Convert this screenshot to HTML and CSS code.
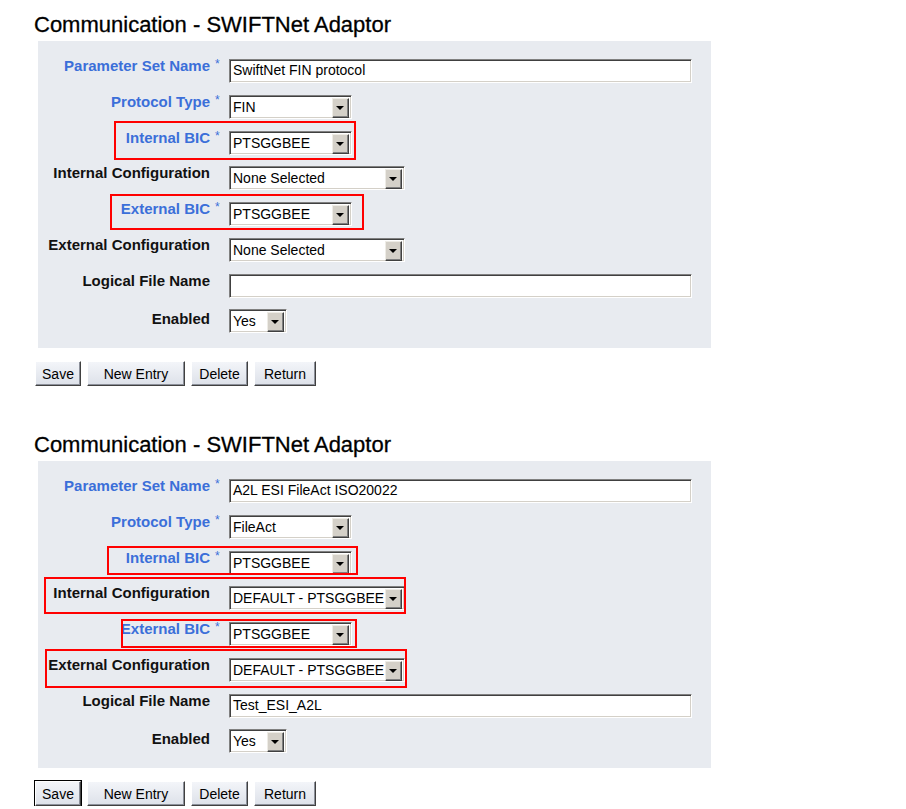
FILE: index.html
```html
<!DOCTYPE html>
<html lang="en">
<head>
  <meta charset="UTF-8" />
  <title>Communication - SWIFTNet Adaptor</title>
  <link rel="stylesheet" href="styles.css">
</head>
<body>
  <div class="page">

    <div class="section">
      <h1 class="title">Communication - SWIFTNet Adaptor</h1>
      <div class="panel">
        <div class="row">
          <label class="label required">Parameter Set Name</label>
          <span class="star">*</span>
          <div class="field"><div class="input">SwiftNet FIN protocol</div></div>
        </div>
        <div class="row">
          <label class="label required">Protocol Type</label>
          <span class="star">*</span>
          <div class="field"><div class="select select-bic"><span class="value">FIN</span><span class="drop"></span></div></div>
        </div>
        <div class="row">
          <span class="mark mark-1a"></span>
          <label class="label required">Internal BIC</label>
          <span class="star">*</span>
          <div class="field"><div class="select select-bic"><span class="value">PTSGGBEE</span><span class="drop"></span></div></div>
        </div>
        <div class="row">
          <label class="label">Internal Configuration</label>
          <span class="star"></span>
          <div class="field"><div class="select select-config"><span class="value">None Selected</span><span class="drop"></span></div></div>
        </div>
        <div class="row">
          <span class="mark mark-1b"></span>
          <label class="label required">External BIC</label>
          <span class="star">*</span>
          <div class="field"><div class="select select-bic"><span class="value">PTSGGBEE</span><span class="drop"></span></div></div>
        </div>
        <div class="row">
          <label class="label">External Configuration</label>
          <span class="star"></span>
          <div class="field"><div class="select select-config"><span class="value">None Selected</span><span class="drop"></span></div></div>
        </div>
        <div class="row">
          <label class="label">Logical File Name</label>
          <span class="star"></span>
          <div class="field"><div class="input"></div></div>
        </div>
        <div class="row">
          <label class="label label-low">Enabled</label>
          <span class="star"></span>
          <div class="field"><div class="select select-yes"><span class="value">Yes</span><span class="drop"></span></div></div>
        </div>
      </div>
      <div class="actions">
        <button class="btn btn-save">Save</button>
        <button class="btn btn-new">New Entry</button>
        <button class="btn btn-delete">Delete</button>
        <button class="btn btn-return">Return</button>
      </div>
    </div>

    <div class="section">
      <h1 class="title">Communication - SWIFTNet Adaptor</h1>
      <div class="panel">
        <div class="row">
          <label class="label required">Parameter Set Name</label>
          <span class="star">*</span>
          <div class="field"><div class="input">A2L ESI FileAct ISO20022</div></div>
        </div>
        <div class="row">
          <label class="label required">Protocol Type</label>
          <span class="star">*</span>
          <div class="field"><div class="select select-bic"><span class="value">FileAct</span><span class="drop"></span></div></div>
        </div>
        <div class="row">
          <span class="mark mark-2a"></span>
          <label class="label required">Internal BIC</label>
          <span class="star">*</span>
          <div class="field"><div class="select select-bic"><span class="value">PTSGGBEE</span><span class="drop"></span></div></div>
        </div>
        <div class="row">
          <span class="mark mark-2b"></span>
          <label class="label">Internal Configuration</label>
          <span class="star"></span>
          <div class="field"><div class="select select-config"><span class="value">DEFAULT - PTSGGBEE</span><span class="drop"></span></div></div>
        </div>
        <div class="row">
          <span class="mark mark-2c"></span>
          <label class="label required">External BIC</label>
          <span class="star">*</span>
          <div class="field"><div class="select select-bic"><span class="value">PTSGGBEE</span><span class="drop"></span></div></div>
        </div>
        <div class="row">
          <span class="mark mark-2d"></span>
          <label class="label">External Configuration</label>
          <span class="star"></span>
          <div class="field"><div class="select select-config"><span class="value">DEFAULT - PTSGGBEE</span><span class="drop"></span></div></div>
        </div>
        <div class="row">
          <label class="label">Logical File Name</label>
          <span class="star"></span>
          <div class="field"><div class="input">Test_ESI_A2L</div></div>
        </div>
        <div class="row">
          <label class="label label-low">Enabled</label>
          <span class="star"></span>
          <div class="field"><div class="select select-yes"><span class="value">Yes</span><span class="drop"></span></div></div>
        </div>
      </div>
      <div class="actions">
        <button class="btn btn-save is-default">Save</button>
        <button class="btn btn-new">New Entry</button>
        <button class="btn btn-delete">Delete</button>
        <button class="btn btn-return">Return</button>
      </div>
    </div>

  </div>
</body>
</html>
```

FILE: styles.css
```css
body {
  margin: 0;
  background-color: #fff;
  color: #000;
  font-family: "Liberation Sans", Arial, sans-serif;
}

.page {
  padding: 12px 0 0 34px;
}

.section + .section {
  margin-top: 46px;
}

.title {
  margin: 0 0 4px;
  font-size: 22px;
  font-weight: normal;
  line-height: 25px;
  color: #000;
  -webkit-text-stroke: 0.3px #000;
}

.panel {
  width: 673px;
  margin-left: 4px;
  padding: 18px 0 3px;
  background-color: #e8ebf0;
}

.row {
  position: relative;
  display: grid;
  grid-template-columns: 172px 19px 1fr;
  height: 35.75px;
}

.label {
  font-size: 15px;
  font-weight: bold;
  line-height: 14px;
  text-align: right;
  color: #111;
}

.label-low {
  margin-top: 3px;
}

.label.required,
.star {
  color: #3b6fd9;
}

.star {
  padding-left: 5px;
  font-size: 12px;
  line-height: 11px;
}

/* text boxes and drop downs, old windows look */
.input,
.select {
  box-sizing: border-box;
  height: 24px;
  background-color: #fff;
  border: 1px solid;
  border-color: #808080 #fff #fff #808080;
  box-shadow: inset 1px 1px 0 #404040, inset -1px -1px 0 #d4d0c8;
  font-size: 14px;
  line-height: 18px;
  white-space: nowrap;
}

.input {
  width: 463px;
  padding: 1px 3px;
}

.select {
  display: flex;
  padding: 2px;
}

.select .value {
  flex: 1;
  min-width: 0;
  padding-left: 1px;
  overflow: hidden;
}

.select-bic {
  width: 123px;
}

.select-config {
  width: 176px;
}

.select-yes {
  width: 58px;
}

.drop {
  position: relative;
  flex: none;
  box-sizing: border-box;
  width: 17px;
  height: 20px;
  background-color: #d4d0c8;
  border: 1px solid;
  border-color: #eeece6 #404040 #404040 #eeece6;
  box-shadow: inset -1px -1px 0 #808080;
}

.drop::after {
  content: "";
  position: absolute;
  left: 3px;
  top: 7px;
  border-left: 4px solid transparent;
  border-right: 4px solid transparent;
  border-top: 4px solid #000;
}

/* red highlight boxes drawn over the rows */
.mark {
  position: absolute;
  z-index: 1;
  box-sizing: border-box;
  border: 2px solid #f00;
  pointer-events: none;
}

.mark-1a { left: 76px; top: -10px; width: 242px; height: 39px; }
.mark-1b { left: 72px; top: -8px; width: 254px; height: 36px; }
.mark-2a { left: 69px; top: -5px; width: 251px; height: 29px; }
.mark-2b { left: 6px; top: -9px; width: 362px; height: 37px; }
.mark-2c { left: 83px; top: -3px; width: 236px; height: 29px; }
.mark-2d { left: 7px; top: -9px; width: 362px; height: 39px; }

.actions {
  display: flex;
  gap: 6px;
  margin: 13px 0 0 1px;
}

.btn {
  box-sizing: border-box;
  height: 25px;
  padding: 0;
  font-family: "Liberation Sans", Arial, sans-serif;
  font-size: 14px;
  color: #000;
  background: linear-gradient(#f3f5f9, #dde1e9);
  border: 1px solid;
  border-color: #fff #404040 #404040 #fff;
  box-shadow: inset -1px -1px 0 #8c909a;
  cursor: pointer;
}

.btn.is-default {
  outline: 1px solid #000;
}

.btn-save { width: 46px; }
.btn-new { width: 98px; }
.btn-delete { width: 57px; }
.btn-return { width: 62px; }
```
